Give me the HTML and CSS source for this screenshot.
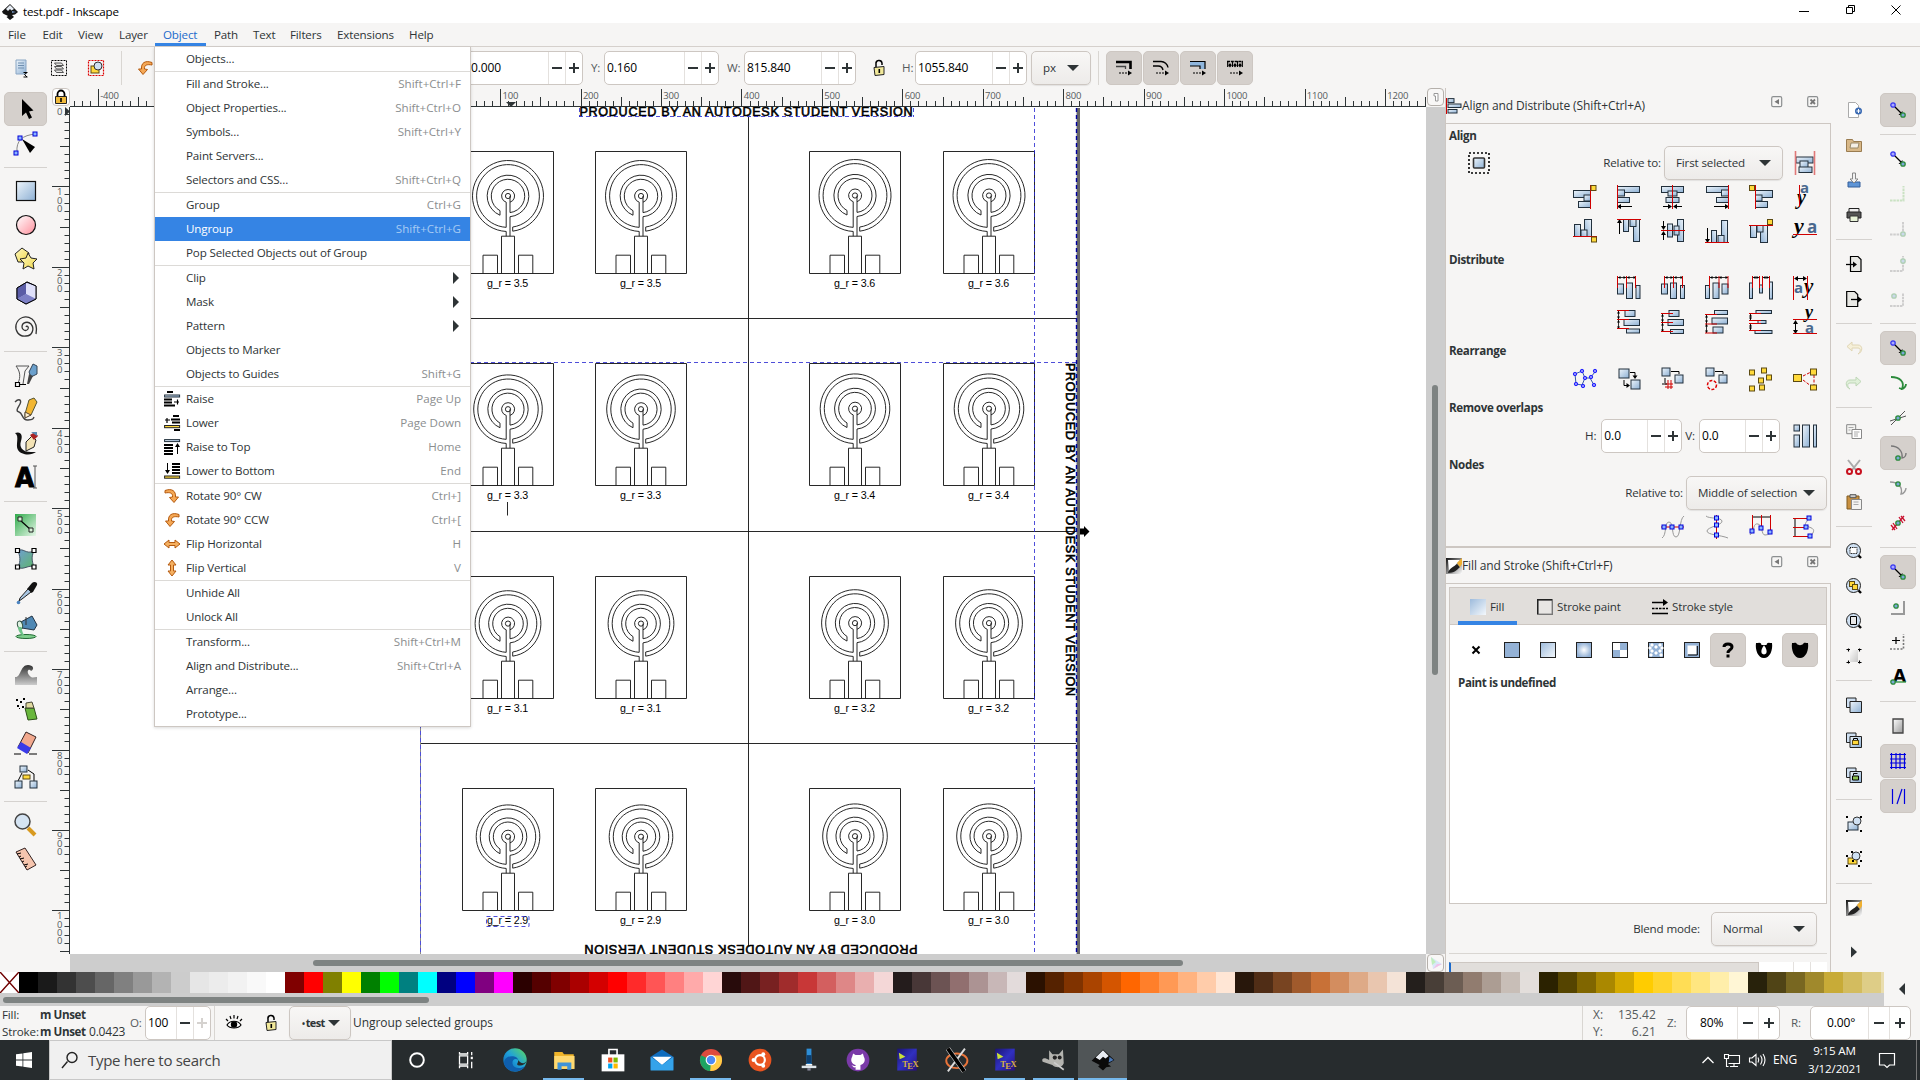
FILE: index.html
```html
<!DOCTYPE html>
<html lang="en">
<head>
<meta charset="utf-8">
<title>test.pdf - Inkscape</title>
<link rel="stylesheet" href="styles.css">
</head>
<body>
<svg class="defs" aria-hidden="true">
  <defs>
    <linearGradient id="gb" x1="0" y1="0" x2="1" y2="1"><stop offset="0" stop-color="#9dbbdc"/><stop offset="1" stop-color="#f4f8fc"/></linearGradient>
    <linearGradient id="gl" x1="0" y1="0" x2="1" y2="1"><stop offset="0" stop-color="#eef5fb"/><stop offset="1" stop-color="#8db0d4"/></linearGradient>
    <linearGradient id="gp" x1="0" y1="0" x2="1" y2="1"><stop offset="0" stop-color="#fff"/><stop offset="1" stop-color="#ff8f9c"/></linearGradient>
    <linearGradient id="gy" x1="0" y1="0" x2="1" y2="1"><stop offset="0" stop-color="#fff9c4"/><stop offset="1" stop-color="#f0d84a"/></linearGradient>
    <linearGradient id="gg" x1="0" y1="0" x2="1" y2="1"><stop offset="0" stop-color="#2faa4a"/><stop offset="1" stop-color="#e8f7ea"/></linearGradient>
    <linearGradient id="gt" x1="0" y1="0" x2="1" y2="1"><stop offset="0" stop-color="#6f9fd0"/><stop offset="1" stop-color="#5fb56a"/></linearGradient>
    <linearGradient id="gk" x1="0" y1="0" x2="0" y2="1"><stop offset="0" stop-color="#333"/><stop offset="1" stop-color="#ccc"/></linearGradient>
    <linearGradient id="gw" x1="0" y1="0" x2="1" y2="1"><stop offset="0" stop-color="#fff"/><stop offset="1" stop-color="#999"/></linearGradient>
    <linearGradient id="gq" x1="0" y1="0" x2="1" y2="1"><stop offset="0" stop-color="#111"/><stop offset="1" stop-color="#fff"/></linearGradient>
    <radialGradient id="gr"><stop offset="0" stop-color="#fff"/><stop offset="1" stop-color="#94b2d6"/></radialGradient>
    <linearGradient id="ge" x1="0" y1="1" x2="1" y2="0"><stop offset="0" stop-color="#0c59a4"/><stop offset=".5" stop-color="#1ea0dc"/><stop offset="1" stop-color="#5fdc5a"/></linearGradient>
    <linearGradient id="gx" x1="0" y1="0" x2="1" y2="1"><stop offset="0" stop-color="#1c1470"/><stop offset=".5" stop-color="#3030c0"/><stop offset="1" stop-color="#28107a"/></linearGradient>
  </defs>
</svg>

<header class="titlebar">
  <i class="ic s16" data-icon="inkscape"></i><span class="title">test.pdf - Inkscape</span>
  <div class="winbtns"><i class="ic s12" data-icon="wmin"></i><i class="ic s12" data-icon="wmax"></i><i class="ic s12" data-icon="wclose"></i></div>
</header>

<nav class="menubar">
  <span class="m1">File</span><span class="m2">Edit</span><span class="m3">View</span><span class="m4">Layer</span><span class="m5 open">Object</span><span class="m6">Path</span><span class="m7">Text</span><span class="m8">Filters</span><span class="m9">Extensions</span><span class="m10">Help</span>
</nav>

<div class="toolbar">
  <i class="ic s24 ti" data-icon="selall"></i><i class="ic s24 ti" data-icon="sellayers"></i><i class="ic s24 ti" data-icon="desel"></i>
  <b class="vsep"></b><i class="ic s24 ti rot" data-icon="rotccw"></i>
  <div class="entry e-x"><span>0.000</span><u class="minus"></u><u class="plus"></u></div>
  <label class="lb-y">Y:</label><div class="entry e-y"><span>0.160</span><u class="minus"></u><u class="plus"></u></div>
  <label class="lb-w">W:</label><div class="entry e-w"><span>815.840</span><u class="minus"></u><u class="plus"></u></div>
  <i class="ic s16 lock" data-icon="lock"></i>
  <label class="lb-h">H:</label><div class="entry e-w"><span>1055.840</span><u class="minus"></u><u class="plus"></u></div>
  <div class="combo unit">px<em></em></div>
  <b class="vsep v2"></b>
  <div class="tog"><i class="ic s16" data-icon="aff1"></i></div><div class="tog"><i class="ic s16" data-icon="aff2"></i></div><div class="tog"><i class="ic s16" data-icon="aff3"></i></div><div class="tog"><i class="ic s16" data-icon="aff4"></i></div>
</div>

<main class="work">
  <aside class="toolbox" id="toolbox"></aside>
  <section class="desk">
    <div class="rulerrow"><div class="rulerlock"><i class="ic s16" data-icon="padlock"></i></div><svg id="hruler" class="hruler" viewBox="70 88 1356 19"></svg><div class="cbtn"><i class="ic s12" data-icon="onetoone"></i></div></div>
    <div class="canvasrow"><svg id="vruler" class="vruler" viewBox="52 107 18 847"></svg><svg id="canvas" class="canvas" viewBox="70 107 1356 847"></svg><div class="vscroll"><div></div></div></div>
    <div class="scrollrow"><div class="hscroll"><div></div></div><div class="cbtn"><i class="ic s16" data-icon="cms"></i></div></div>
  </section>

  <section class="dock">
    <div class="dhead"><i class="ic s16" data-icon="align"></i><span>Align and Distribute (Shift+Ctrl+A)</span><i class="ic s12 dk1" data-icon="iconify"></i><i class="ic s12 dk2" data-icon="closebox"></i></div>
    <div class="panel align">
      <h4 class="first">Align</h4>
      <div class="row"><i class="ic s24 selgrp" data-icon="selgroup"></i><label>Relative to:</label><div class="combo c-first">First selected<em></em></div><span class="cell"><i class="ic s24" data-icon="relobj"></i></span></div>
      <div class="row" data-cells="al1 al2 al3 al4 al5 al6"></div>
      <div class="row" data-cells="bl1 bl2 bl3 bl4 bl5 bl6"></div>
      <h4>Distribute</h4>
      <div class="row" data-cells="d1 d2 d3 d4 d5"></div>
      <div class="row" data-cells="f1 f2 f3 f4 f5"></div>
      <h4>Rearrange</h4>
      <div class="row" data-cells="r1 r2 r3 r4 r5 r6"></div>
      <h4>Remove overlaps</h4>
      <div class="row"><label class="hh">H:</label><div class="entry e-s"><span>0.0</span><u class="minus"></u><u class="plus"></u></div><label class="vv">V:</label><div class="entry e-s"><span>0.0</span><u class="minus"></u><u class="plus"></u></div><span class="cell ov"><i class="ic s24" data-icon="overlap"></i></span></div>
      <h4>Nodes</h4>
      <div class="row"><label>Relative to:</label><div class="combo c-mid">Middle of selection<em></em></div></div>
      <div class="row" data-cells="n1 n2 n3 n4"></div>
    </div>
    <div class="dhead second"><i class="ic s16" data-icon="fillstroke"></i><span>Fill and Stroke (Shift+Ctrl+F)</span><i class="ic s12 dk1" data-icon="iconify"></i><i class="ic s12 dk2" data-icon="closebox"></i></div>
    <div class="panel fill">
      <div class="notebook">
        <div class="tabs"><div class="tab on"><i class="ic s16" data-icon="tfill"></i>Fill</div><div class="tab t2"><i class="ic s16" data-icon="tstroke"></i>Stroke paint</div><div class="tab t3"><i class="ic s16" data-icon="tstyle"></i>Stroke style</div></div>
        <div class="paints" id="paints"></div>
        <p class="undef">Paint is undefined</p>
      </div>
      <div class="blend"><label>Blend mode:</label><div class="combo c-norm">Normal<em></em></div></div>
      <div class="slider"><div class="track"></div><div class="num"></div></div>
    </div>
  </section>
  <aside class="col commands" id="commands"></aside>
  <aside class="col snaps" id="snaps"></aside>
</main>

<div class="palette"><div class="swatches" id="swatches"></div><i class="larrow"></i></div>
<div class="palscroll"><div></div></div>

<footer class="status">
  <div class="style"><div><span class="k">Fill:</span><b>m Unset</b></div><div><span class="k">Stroke:</span><b>m Unset</b><span class="sw">0.0423</span></div></div>
  <label class="lb-o">O:</label><div class="entry e-o"><span>100</span><u class="minus"></u><u class="plus off"></u></div><b class="vsep v3"></b>
  <i class="ic s16 eye" data-icon="eye"></i><i class="ic s16 lk2" data-icon="lock"></i>
  <div class="combo layer"><b><small>•</small>&thinsp;test</b><em></em></div><span class="msg">Ungroup selected groups</span>
  <b class="vsep v4"></b>
  <div class="xy"><div><span>X:</span><span>135.42</span></div><div><span>Y:</span><span>6.21</span></div></div>
  <label class="lb-z">Z:</label><div class="entry e-z"><span>80%</span><u class="minus"></u><u class="plus"></u></div>
  <label class="lb-r">R:</label><div class="entry e-r"><span>0.00°</span><u class="minus"></u><u class="plus"></u></div>
</footer>

<footer class="taskbar">
  <div class="start"><i class="ic s16" data-icon="win"></i></div>
  <div class="search"><i class="ic s18" data-icon="search"></i><span>Type here to search</span></div>
  <div class="apps" id="apps"></div>
  <div class="tray"><i class="ic s14 y1" data-icon="up"></i><i class="ic s18 y2" data-icon="net"></i><i class="ic s18 y3" data-icon="vol"></i><span class="eng">ENG</span><span class="clock">9:15 AM<br>3/12/2021</span><i class="ic s18 y4" data-icon="note"></i><b></b></div>
</footer>

<div class="menu" id="menu"></div>
<script src="app.js"></script>
</body>
</html>
```
FILE: styles.css
```css
* { box-sizing: border-box; }
body { margin: 0; width: 1920px; height: 1080px; overflow: hidden; display: flex; flex-direction: column; font: 11.6px/16px "Open Sans", "Noto Sans", sans-serif; color: #2e3436; background: #f6f5f4; letter-spacing: -.15px; }
.defs { width: 0; height: 0; position: absolute; }
.ic { display: block; flex: none; }
.ic svg { display: block; width: 100%; height: 100%; overflow: visible; }
.s12 { width: 12px; height: 12px; } .s14 { width: 14px; height: 14px; } .s16 { width: 16px; height: 16px; } .s18 { width: 18px; height: 18px; } .s24 { width: 24px; height: 24px; }
i, em, u { font-style: normal; text-decoration: none; }

.titlebar { height: 23px; background: #fff; display: flex; align-items: center; padding: 0 0 0 2px; flex: none; color: #000; }
.title { margin-left: 5px; }
.winbtns { margin-left: auto; display: flex; gap: 34px; padding-right: 18px; margin-bottom: 3px; }

.menubar { height: 24px; flex: none; display: flex; border-bottom: 1px solid #d5d0cc; line-height: 24px; }
.menubar span { padding-left: 8px; white-space: nowrap; }
.m1, .m2 { width: 34.5px; } .m2 { width: 35.5px; } .m3 { width: 41px; } .m4 { width: 44px; } .m5 { width: 51px; } .m6 { width: 39px; } .m7 { width: 37px; } .m8 { width: 47px; } .m9 { width: 72px; }
.menubar .open { color: #1b6acb; box-shadow: inset 0 -3px #3584e4; }

.toolbar { height: 41px; flex: none; display: flex; align-items: center; padding-left: 10px; }
.ti { margin-right: 13px; }
.vsep { width: 1px; height: 34px; background: #d9d6d2; flex: none; }
.rot { margin: 0 -1px 0 11px; }
.entry { height: 34px; border: 1px solid #cdc7c2; border-radius: 5px; background: #fff; display: flex; align-items: center; color: #000; padding-left: 2px; flex: none; font-size: 12px; letter-spacing: -.1px; }
.entry span { flex: 1; white-space: nowrap; }
.entry u { width: 17px; height: 32px; border-left: 1px solid #e4e1de; position: relative; flex: none; }
u::before, u.plus::after { content: ""; position: absolute; background: #2e3436; left: 3px; top: 15px; width: 10px; height: 2px; }
u.plus::after { left: 7px; top: 11px; width: 2px; height: 10px; }
u.off::before, u.off::after { background: #d5d2cf; }
.e-x { width: 130px; margin-left: 297px; } .e-x span { padding-left: 15px; }
.e-y { width: 115px; } .e-w { width: 112px; }
.toolbar label { color: #555b5d; }
.lb-y { width: 21px; padding-left: 8px; } .lb-w { width: 25px; padding-left: 8px; } .lb-h { width: 28px; padding-left: 15px; }
.lock { margin-left: 15px; }
.combo { height: 34px; border: 1px solid #cdc7c2; border-radius: 5px; background: linear-gradient(#f8f7f6, #edebe9); box-shadow: 0 1px 1px rgba(0,0,0,.08); display: flex; align-items: center; justify-content: space-between; flex: none; padding: 0 11px; white-space: nowrap; }
.combo em { border: 6px solid transparent; border-top: 6px solid #2e3436; border-bottom: 0; }
.unit { width: 60px; margin-left: 4px; }
.v2 { margin: 0 7px; }
.tog { width: 36px; height: 34px; border: 1px solid #cdc7c2; border-radius: 5px; background: #d5d0cc; display: flex; align-items: center; justify-content: center; margin-right: 1px; flex: none; }

.work { height: 884px; flex: none; display: flex; overflow: hidden; }
.toolbox { width: 52px; padding: 4px 0 0 4px; flex: none; }
.toolbox .b { width: 43px; height: 34px; display: flex; align-items: center; justify-content: center; border-radius: 5px; }
.toolbox .b.on { background: #d5d0cc; border: 1px solid #cdc7c2; }
.sp { height: 14px; display: flex; align-items: center; width: 43px; }
.sp::before { content: ""; height: 1px; background: #d5d2cf; flex: 1; }
.desk { width: 1393px; flex: none; display: flex; flex-direction: column; }
.rulerrow { height: 19px; display: flex; }
.rulerlock { width: 18px; height: 18px; border: 1px solid #cdc7c2; border-radius: 4px; background: #fff; flex: none; display: flex; justify-content: center; }
.hruler { width: 1356px; height: 19px; flex: none; }
.cbtn { width: 17px; height: 18px; margin-left: 1px; border: 1px solid #b5b0ab; border-radius: 4px; background: #f8f7f6; display: flex; align-items: center; justify-content: center; flex: none; overflow: hidden; }
.canvasrow { height: 847px; display: flex; }
.vruler { width: 18px; height: 847px; flex: none; }
.canvas { width: 1356px; height: 847px; flex: none; background: #fff; }
.vscroll { flex: 1; background: #cdcdcd; padding: 278px 0 0 6px; }
.vscroll div { width: 6px; height: 290px; border-radius: 3px; background: #7e8382; }
.scrollrow { height: 18px; display: flex; }
.hscroll { margin-left: 18px; width: 1356px; background: #cdcdcd; padding: 6px 0 0 243px; flex: none; }
.hscroll div { width: 870px; height: 6px; border-radius: 3px; background: #7e8382; }
.rl { font: 9.5px "Open Sans", sans-serif; fill: #555b5d; letter-spacing: -.2px; }

.dock { width: 386px; flex: none; border-left: 1px solid #cdc7c2; height: 884px; display: flex; flex-direction: column; overflow: hidden; }
.dhead { height: 35px; flex: none; display: flex; align-items: center; font-size: 12px; letter-spacing: -.12px; }
.dhead span { width: 309px; white-space: nowrap; }
.dk2 { margin-left: 24px; }
.dk1, .dk2 { margin-bottom: 8px; }
.panel { border: 1px solid #cdc7c2; border-left: 0; flex: none; }
.align { height: 425px; border-bottom-width: 2px; }
.panel h4 { margin: 0; height: 23px; line-height: 23px; font-size: 11.6px; font-weight: 700; padding-left: 3px; letter-spacing: -.35px; }
.panel h4.first { height: 22px; }
.row { height: 34px; display: flex; justify-content: flex-end; align-items: center; padding-right: 3px; }
.cell { width: 44px; display: flex; justify-content: center; flex: none; }
.row label { padding-right: 3px; }
.selgrp { margin-right: auto; margin-left: 21px; }
.c-first { width: 119px; } .c-mid { width: 141px; }
.e-s { width: 81px; } .row .hh { padding-right: 5px; } .row .vv { padding-left: 3px; padding-right: 4px; } .ov { margin-left: 3px; }
.fill { height: 400px; padding: 3px 3px 0; }
.notebook { height: 317px; border: 1px solid #cdc7c2; background: #fff; }
.tabs { height: 37px; background: #e1dedb; border-bottom: 1px solid #cdc7c2; display: flex; padding-left: 8px; }
.tab { display: flex; align-items: center; gap: 4px; height: 37px; padding: 0 0 0 12px; width: 59px; white-space: nowrap; }
.tab.on { box-shadow: inset 0 -4px #3584e4; }
.t2 { width: 115px; padding-left: 20px; } .t3 { width: 100px; padding-left: 20px; }
.paints { display: flex; padding: 8px 0 0 8px; }
.paints .b { width: 36px; height: 34px; display: flex; align-items: center; justify-content: center; border-radius: 5px; border: 1px solid transparent; }
.paints .on { background: #d5d0cc; border-color: #cdc7c2; }
.undef { margin: 8px 0 0 8px; font-weight: 700; letter-spacing: -.4px; }
.blend { height: 50px; display: flex; align-items: center; justify-content: flex-end; padding-right: 10px; border-bottom: 1px solid #d9d6d2; }
.blend label { margin-right: 11px; }
.c-norm { width: 106px; }
.slider { height: 20px; margin-top: 8px; display: flex; }
.track { width: 310px; background: #e1dedb; border: 1px solid #cdc7c2; border-left: 2px solid #1b6acb; }
.num { flex: 1; background: linear-gradient(90deg, #fff 34px, #e4e1de 34px, #e4e1de 35px, #fff 35px, #fff 51px, #e4e1de 51px, #e4e1de 52px, #fff 52px); }
.col { flex: none; padding-top: 5px; display: flex; flex-direction: column; gap: 1px; align-items: center; }
.commands { width: 45px; } .snaps { width: 44px; padding-right: 1px; }
.col .b { width: 36px; height: 34px; display: flex; align-items: center; justify-content: center; border-radius: 5px; border: 1px solid transparent; flex: none; }
.col .on { background: #d5d0cc; border-color: #cdc7c2; }
.col .sp { height: 13px; width: 36px; flex: none; }
.col .faint { opacity: .35; }
.col .more { height: 52px; }

.palette { height: 21px; flex: none; display: flex; }
.swatches { width: 1884px; display: flex; overflow: hidden; }
.swatches i { width: 19px; flex: none; }
.swatches svg { display: block; width: 19px; height: 21px; background: #fff; flex: none; }
.larrow { border: 6px solid transparent; border-right: 6px solid #2e3436; border-left: 0; height: 0; margin: 11px 0 0 15px; }
.palscroll { height: 13px; flex: none; width: 1884px; background: #cdcdcd; padding: 4px 0 0 3px; }
.palscroll div { width: 426px; height: 6px; border-radius: 3px; background: #7e8382; }

.status { height: 34px; flex: none; display: flex; align-items: center; padding-left: 2px; }
.style { width: 128px; flex: none; line-height: 17px; white-space: nowrap; }
.style div { display: flex; }
.style .k { width: 38px; flex: none; } .style b { width: 49px; flex: none; letter-spacing: -.4px; }
.style .sw { font-size: 12px; letter-spacing: -.2px; }
.status label { color: #555b5d; }
.lb-o { width: 15px; } .e-o { width: 66px; }
.v3 { margin-left: 3px; }
.eye { margin-left: 11px; } .lk2 { margin: 0 10px 0 21px; }
.layer { width: 62px; padding: 0 10px 0 12px; font-size: 11px; } .layer b { letter-spacing: -.6px; } .layer small { font-size: 8px; }
.msg { margin-left: 2px; width: 1229px; font-size: 12px; letter-spacing: -.05px; }
.xy { width: 74px; margin-left: 10px; line-height: 17px; font-size: 12px; letter-spacing: .1px; color: #555b5d; } .xy div { display: flex; } .xy span:first-child { flex: 1; } .xy div { width: 63px; }
.lb-z { width: 19px; } .e-z { width: 94px; padding-left: 13px; } .e-z u, .e-r u { width: 21px; }
.e-z u::before, .e-r u::before { left: 5px; } .e-z u.plus::after, .e-r u.plus::after { left: 9px; }
.lb-r { width: 30px; padding-left: 11px; } .e-r { width: 101px; padding-left: 16px; }

.taskbar { height: 40px; flex: none; background: #272c2e; display: flex; color: #fff; }
.start { width: 49px; display: flex; align-items: center; padding-left: 16px; }
.search { width: 343px; background: #f0f0f0; color: #444; font-size: 15px; letter-spacing: -.3px; display: flex; align-items: center; padding-left: 11px; border: 1px solid #c8c8c8; }
.search span { margin-left: 9px; }
.apps { display: flex; width: 736px; }
.apps div { width: 49px; display: flex; align-items: center; justify-content: center; flex: none; }
.apps .ic { width: 26px; height: 26px; }
.apps .run { background: linear-gradient(90deg, transparent 4px, #76b9ed 4px, #76b9ed 45px, transparent 45px) bottom / 100% 2px no-repeat; }
.apps .act { background: linear-gradient(#76b9ed, #76b9ed) bottom / 100% 2px no-repeat #505557; }
.tray { margin-left: auto; display: flex; align-items: center; }
.y1 { margin-right: 8px; } .y2 { margin-right: 7px; } .y3 { margin-right: 7px; }
.eng { width: 35px; font-size: 12px; } .clock { width: 53px; text-align: center; line-height: 18px; margin-right: 17px; }
.tray b { width: 1px; height: 40px; background: #777; margin: 0 3px 0 20px; }

.menu { position: absolute; left: 154px; top: 47px; width: 317px; height: 680px; background: #fff; border: 1px solid #cdc7c2; border-top: 0; box-shadow: 0 1px 3px rgba(0,0,0,.15); }
.mi { height: 24px; display: flex; align-items: center; padding: 0 9px 0 9px; white-space: nowrap; }
.mi .ic { margin-right: 6px; } .mi .no { width: 22px; margin: 0; }
.mi span { flex: 1; } .mi kbd { font: inherit; color: #8b8e8f; letter-spacing: 0; }
.mi.hot { background: #3584e4; color: #fff; } .mi.hot kbd { color: #a7cbf4; }
.mi em { border: 6px solid transparent; border-left: 6px solid #2e3436; border-right: 0; margin-right: 2px; }
.ms { height: 1px; background: #dcdad7; }
```
FILE: app.js
```js
// Icon helpers: outlined blue / yellow boxes, red rules and plain strokes.
const B = (x, y, w, h) => `<rect x="${x}" y="${y}" width="${w}" height="${h}" fill="url(#gl)" stroke="#22303c" stroke-width="1"/>`;
const Y = (x, y, w = 5, h = 5) => `<rect x="${x}" y="${y}" width="${w}" height="${h}" fill="#ffd93b" stroke="#5c4a12"/>`;
const R = d => `<path d="${d}" stroke="#d00000" fill="none"/>`;
const K = (d, w = 1, f = 'none', s = '#000') => `<path d="${d}" stroke="${s}" stroke-width="${w}" fill="${f}"/>`;
const F = (d, f = '#000') => `<path d="${d}" fill="${f}"/>`;
const T = (t, x, y, s, st) => `<text x="${x}" y="${y}" font-size="${s}" style="${st}">${t}</text>`;
const rot = s => `<g transform="rotate(90 12 12)">${s}</g>`;
const swap = s => `<g transform="matrix(0 1 1 0 0 0)">${s}</g>`;
const N = (x, y) => `<rect x="${x - 2}" y="${y - 2}" width="4" height="4" fill="#8ab4ff" stroke="#0000d8"/>`;
const dot = (x, y, c, f) => `<circle cx="${x}" cy="${y}" r="2.2" fill="${f}" stroke="${c}" stroke-width="1.3"/>`;
const blueDot = (x, y) => dot(x, y, '#3a3af0', '#a9a9ff'), greenDot = (x, y) => dot(x, y, '#2c8a3a', '#7aa8d8');

const al1 = B(.5, 5.5, 17, 7) + B(11, 10, 6.5, 6) + B(5.5, 16.5, 12, 6) + R('M17.5 0V24') + Y(18, .5);
const al5 = B(6.5, 5.5, 17, 7) + B(6.5, 10, 6.5, 6) + B(6.5, 16.5, 12, 6) + R('M6.5 0V24') + Y(.5, .5);
const al2 = B(.5, 1.5, 22, 6) + B(.5, 5, 7, 6) + B(.5, 12.5, 12, 5) + K('M1 21.5H15') + F('M0 21.5l4-2.5v5z') + R('M.5 0V24');
const al3 = B(.5, 1.5, 22, 6) + B(7, 6, 9, 5) + B(5, 12.5, 13, 5) + K('M2 21.5H9M14 21.5H21') + F('M11 21.5l-4-2.5v5zM12 21.5l4-2.5v5z') + R('M11.5 0V24');
const al4 = B(1.5, 1.5, 22, 6) + B(16.5, 5, 7, 6) + B(11.5, 12.5, 12, 5) + K('M9 21.5H23') + F('M24 21.5l-4-2.5v5z') + R('M23.5 0V24');
const arr = K('M1 1.5H19', .8) + F('M1 1.5l2.500-1.500v3zM9 1.5l-2.500-1.500v3zM10 1.5l2.500-1.500v3zM19 1.5l-2.500-1.500v3z');
const bars = B(.5, 8, 6, 10) + B(9.5, 7, 6, 15.5) + B(19, 9.5, 4, 13);
const d1 = bars + arr + R('M.5 0V12M9.5 0V12M18.5 0V12'), d2 = B(.5, 8, 6, 10) + B(9.5, 7, 6, 15.5) + B(19.5, 9.5, 4, 13) + `<g transform="translate(3 0)">${arr}</g>` + R('M3.5 0V12M12.5 0V12M21.5 0V12'), d3 = B(.5, 9.5, 4, 13) + B(8, 7, 6, 15.5) + B(17, 8, 6, 10) + `<g transform="translate(4 0)">${arr}</g>` + R('M4.5 0V12M14 0V12M23 0V12');
const d4 = B(.5, 7, 3, 15.5) + B(10.5, 9, 3, 8) + B(20.5, 6, 3, 17) + K('M4 1.500H10M14 1.500H20', .8) + F('M4 1.5l2.500-1.500v3zM10 1.5l-2.500-1.500v3zM14 1.5l2.500-1.500v3zM20 1.5l-2.500-1.500v3z') + R('M3.5 0V12M10.5 0V12M13.5 0V12M20.5 0V12');
const ya = 'font-family:Liberation Serif;font-style:italic;font-weight:bold', aa = 'font-family:Open Sans;font-weight:bold;fill:#49688e';
const snapPair = blueDot(3, 3) + K('M5 5l6 6', 1.2) + F('M12.500 9v4h-4z') + greenDot(13, 13);
const lens = K('M11 11l4 4', 2.4) + `<circle cx="7.500" cy="7.500" r="7" fill="#cfe0f2" stroke="#222"/>`;
const pages = `<path d="M.5 1h9.500v9.500h-9.500z" fill="#cfe0f2" stroke="#222"/><path d="M4 4.500h11.500v11h-11.500z" fill="url(#gl)" stroke="#222"/>`;
const orangeCurve = `<path d="M1 2.500C8 0 12 3 11.500 9H14.500L10 14.500 5.500 9.500 8.500 9C9 5 6 4 1 5z" fill="#f5a855" stroke="#b45a10"/>`;
const inkscape = `<path d="M8 0L16 8 13 10.500 10 11 12 13 8 16 4.500 13 6 12 1 9.500 0 7.500z" fill="#141414"/><path d="M8 1L12 5 9.500 6.500 8 5 6 7 4 5z" fill="#e8eef6"/><path d="M10 7l4 1-4 1z" fill="#6f8fb8"/>`;
const tex = `<rect x="2" y="1" width="12" height="13.500" fill="url(#gx)"/><path d="M3 3.500l4 2.500-3.500 1.500z" fill="#c8e03a"/>` + T('T<tspan dy="1.500">E</tspan><tspan dy="-1.500">X</tspan>', 5, 12, 5.2, 'font-family:Liberation Serif;font-weight:bold;fill:#d8b040;letter-spacing:-.3px');

// name: [viewBox size, markup]
const ICONS = {
  inkscape: [16, inkscape],
  wmin: [12, K('M1 7.500H11')], wmax: [12, K('M2.500 3.500h6v6h-6zM4.500 3.500v-2h6v6h-2')], wclose: [12, K('M1.500 1.500l9 9M10.500 1.500l-9 9')],
  selall: [24, `<path d="M6 4h10v14h-10z" fill="url(#gl)" stroke="#8aa6c4"/>` + K('M8 7h6M8 9.500h6M8 12h6', 1, 'none', '#6f8fb0') + K('M13.500 16.500h4M17 16.500l-2.500 2 2.500 2.500M13.500 21h4')],
  sellayers: [24, K('M4.500 4.500h15v15h-15z', 1).replace('/>', ' stroke-dasharray="2 1"/>') + K('M7.500 7h7l2 2.500h-7zM7.500 10.500h7l2 2.500h-7zM7.500 14h7l2 2.500h-7z', .9, '#e4e4e2', '#444')],
  desel: [24, `<path d="M4.500 4.500h15v15h-15z" fill="none" stroke="#d00" stroke-width="1.200" stroke-dasharray="2 1"/>` + Y(7, 10, 8, 7) + `<circle cx="14" cy="10" r="4" fill="#cfe0f2" stroke="#333"/>`],
  rotccw: [24, `<g transform="translate(20 4) scale(-1 1)">${orangeCurve}</g>`],
  lock: [16, K('M5 8V4a3 3 0 0 1 6 -1v2', 1.5) + `<path d="M3 7.500l10-1v8l-9 1z" fill="#f2e99a" stroke="#222"/>` + F('M7.500 9h1.600v4h-1.600z')],
  padlock: [16, K('M4.500 8V5a3.500 3.500 0 0 1 7 0v3', 1.8) + `<path d="M2.500 7.500h11v7h-11z" fill="#f0b93a" stroke="#222"/>` + F('M7.200 9h1.600v4h-1.600z')],
  aff1: [16, K('M0 2H14.500V9', 2.6) + K('M0 6.500H9.500V9', 1.3, 'none', '#444') + K('M3 13h10', 1.2).replace('/>', ' stroke-dasharray="2 1"/>') + F('M12 10.500l4 2.500-4 2.500z')],
  aff2: [16, K('M0 1.500H8a7 7 0 0 1 7 6M0 6H5a5 5 0 0 1 5 4', 1.4) + K('M3 13h10', 1.2).replace('/>', ' stroke-dasharray="2 1"/>') + F('M12 10.500l4 2.500-4 2.500z')],
  aff3: [16, `<path d="M0 1h15v8h-5V6H0z" fill="#8fb6dd"/>` + K('M0 1.500H15V9M0 6H10V9', 1.2) + K('M3 13h10', 1.2).replace('/>', ' stroke-dasharray="2 1"/>') + F('M12 10.500l4 2.500-4 2.500z')],
  aff4: [16, K('M0 1.500H16', 1.6).replace('/>', ' stroke-dasharray="3 .8"/>') + K('M.7 1v6M5.500 1v6M10.500 1v6M15.300 1v6', 1.200) + F('M3 3l1.800 2.200L3 7.500 1.200 5.200zM8 3l1.800 2.200L8 7.500 6.200 5.200zM13 3l1.800 2.200L13 7.500 11.200 5.200z') + K('M3 13h10', 1.2).replace('/>', ' stroke-dasharray="2 1"/>') + F('M12 10.500l4 2.500-4 2.500z')],
  onetoone: [12, K('M4 2.500h4v7.500h-2.500v-5h-1.500z', 1, '#fff', '#999')],
  cms: [16, `<path d="M3 2L14 9 5 14z" fill="#d8e8f8"/><path d="M3 2l5 5-4 3z" fill="#bfeebb"/><path d="M5 14l4-5 5 0z" fill="#f2c0e8"/>`],
  align: [16, B(2, .6, 6, 4) + B(2, 6, 13, 3.5) + B(2, 11.500, 9, 3.5) + R('M.5 0V16')],
  fillstroke: [16, `<path d="M0 0h16v16h-16z" fill="url(#gq)"/><path d="M2 2h12L3 14z" fill="#fff"/><path d="M2 15C3 10 8 9 11 6l3 3C11 12 8 15 2 15z" fill="#222"/><path d="M11 5l5-5v6l-2 3z" fill="#f0b030"/>`],
  iconify: [12, `<rect x=".7" y=".7" width="10" height="10" rx="1.500" fill="none" stroke="#8c8f90" stroke-width="1.200"/>` + F('M8 3v5.500L3.500 5.700z', '#777')],
  closebox: [12, `<rect x=".7" y=".7" width="10" height="10" rx="1.500" fill="none" stroke="#8c8f90" stroke-width="1.200"/>` + K('M3.500 3.500l4.500 4.500M8 3.500l-4.500 4.500', 1.8, 'none', '#777')],
  selgroup: [24, K('M2 2h20v20h-20z', 1.6).replace('/>', ' stroke-dasharray="2 2"/>') + `<rect x="6.500" y="7" width="11" height="10" rx="1" fill="url(#gl)" stroke="#333" stroke-width="1.600"/>`],
  relobj: [24, B(3, 6, 17, 6) + B(7, 10, 8, 7) + B(6, 16, 13, 5.5) + K('M2.500 0V24M21.500 0V24', 1.6, 'none', '#e07878')],
  al1: [24, al1], al2: [24, al2], al3: [24, al3], al4: [24, al4], al5: [24, al5],
  al6: [24, T('a', 7, 8, 15, aa) + T('y', 4, 19, 20, ya) + R('M6.500 0V22')],
  bl1: [24, rot(al1)], bl2: [24, rot(al2)], bl3: [24, rot(al3)], bl4: [24, rot(al4)], bl5: [24, rot(al5)],
  bl6: [24, T('y', 1, 14, 22, ya) + T('a', 14, 14, 17, aa) + R('M0 15.500H24')],
  d1: [24, d1], d2: [24, d2], d3: [24, d3], d4: [24, d4],
  d5: [24, K('M2 2.500H13') + F('M1 2.500l4-2.500v5zM14 2.500l-4-2.500v5z') + T('a', 1, 17, 15, aa) + T('y', 11, 17, 21, ya) + R('M.5 0V24M14.500 0V24')],
  f1: [24, swap(d1)], f2: [24, swap(d2)], f3: [24, swap(d3)], f4: [24, swap(d4)],
  f5: [24, K('M2.500 12V23') + F('M2.500 10l-2.500 4h5zM2.500 24l-2.500-4h5z') + T('a', 12, 23, 15, aa) + T('y', 12, 8, 18, ya) + R('M0 9.500H24M0 23.500H24')],
  r1: [24, K('M2 7L9 4 12 11 9 18 3 17 2 7M12 11L17 11 22 5M17 11L21 18', 1, 'none', '#3355aa') + [[2, 7], [9, 4], [12, 11], [10, 19], [3, 17], [18, 10], [22, 4], [21, 18]].map(p => `<circle cx="${p[0]}" cy="${p[1]}" r="1.700" fill="#88f" stroke="#22f"/>`).join('')],
  r2: [24, B(2, 2, 10, 9) + B(14, 13, 9, 9) + K('M13 5.500H18V10M7 13V18.500H11') + F('M18 12l-2.500-3.500h5zM13 18.500l-3.500-2.500v5z')],
  r3: [24, B(1, 1, 8, 8) + B(14, 8, 8, 8) + K('M10 4.500H18V7M4 11v5') + R('M4 17H12M4 20H12M7 13V22M10 13V22') + K('M1 17h5')],
  r4: [24, B(1, 1, 8, 8) + B(14, 8, 8, 8) + K('M10 4.500H18V7') + `<circle cx="7" cy="18" r="4.500" fill="none" stroke="#d00" stroke-width="1.500" stroke-dasharray="3 1.500"/>`],
  r5: [24, Y(.5, 3) + Y(12.500, 1) + Y(17.500, 8) + Y(9.500, 11) + Y(.5, 19) + Y(10.500, 18)],
  r6: [24, R('M10 9L18 5M10 13L18 19M21 8V18').replace('/>', ' stroke-dasharray="3 1.500"/>') + Y(.5, 7.500, 8, 7) + Y(17.500, 2, 6, 6) + Y(17.500, 18, 6, 5)],
  overlap: [24, B(1, 1, 5.5, 6) + B(1, 11, 5.5, 12) + B(9.500, 1, 7, 22) + B(20.500, 1, 3, 22)],
  n1: [24, K('M1 23C6 20 3 7 8 7S10 22 15 22 18 4 23 1', 1, 'none', '#999') + R('M0 12H23') + N(3, 12) + N(11, 12) + N(20, 12)],
  n2: [24, K('M1 1C4 4 16 2 17 6S2 12 2 16 16 20 23 23', 1, 'none', '#999') + R('M11.500 0V24') + N(11.5, 3) + N(11.5, 10) + N(11.5, 20)],
  n3: [24, K('M1 20C6 14 4 8 9 9S12 20 16 20 20 18 23 18', 1, 'none', '#999') + K('M3 2H21') + R('M3.500 0V16M12.500 0V13M21.500 0V17') + N(3, 16) + N(12, 13) + N(21, 17)],
  n4: [24, K('M18 2C12 8 10 10 16 12S22 16 17 22', 1, 'none', '#999') + K('M2 3V21') + R('M0 3.500H16M0 12.500H12M0 21.500H17') + N(16, 3) + N(13, 12) + N(17, 21)],
  tfill: [16, F('M0 0h16v16h-16z', 'url(#gb)')],
  tstroke: [16, `<rect x=".7" y=".7" width="14.600" height="14.600" fill="#e8e6e4" stroke="#777" stroke-width="1.400"/>` + K('M.7 15V.7H15', 1.4, 'none', '#222')],
  tstyle: [16, K('M0 3.500h14M0 14.500h16', 1.4) + K('M0 9.500h16', 1.4).replace('/>', ' stroke-dasharray="2.500 1"/>') + F('M11 0l5 3.500-5 3.500z')],
  p0: [16, K('M4.500 4.500l7 7M11.500 4.500l-7 7', 2)],
  p1: [16, `<rect x=".5" y=".5" width="15" height="15" fill="#94b2d6" stroke="#222"/>`],
  p2: [16, `<rect x=".5" y=".5" width="15" height="15" fill="url(#gb)" stroke="#222"/>`],
  p3: [16, `<rect x=".5" y=".5" width="15" height="15" fill="url(#gr)" stroke="#222"/>`],
  p4: [16, `<rect x=".5" y=".5" width="15" height="15" fill="#fff" stroke="#222"/>` + F('M8 1h7v7h-7zM1 8h7v7h-7z', '#94b2d6')],
  p5: [16, `<rect x=".5" y=".5" width="15" height="15" fill="#94b2d6" stroke="#222"/>` + [[4, 3], [12, 3], [8, 5], [2, 6], [14, 6], [4, 9], [12, 9], [8, 11], [3, 13], [13, 13]].map(p => `<path d="M${p[0]} ${p[1] - 2}l2 2-2 2-2-2z" fill="#fff"/>`).join('')],
  p6: [16, `<rect x="2" y="2" width="12" height="12" fill="#fff" stroke="#94b2d6" stroke-width="3"/><rect x=".5" y=".5" width="15" height="15" fill="none" stroke="#222"/>` + K('M4 13H13.300V4', 1)],
  p7: [16, K('M4 5C4 1 12 1 12 5 12 8 8 7.500 8 11', 3) + F('M6.500 12.500h3v3h-3z')],
  p8: [16, F('M0 1C2 1 4 0 5 1.500L5.500 3H10.500L11 1.500C12 0 14 1 16 1 17 8 14 16 8 16S-1 8 0 1z') + F('M8 3.500C11 7 12 12 8 12.500 4 12 5 7 8 3.500z', '#fff') + F('M5.500 0h5L8 3.500z', '#fff')],
  p9: [16, F('M0 1C2 1 4 0 5 2C6 3.500 10 3.500 11 2 12 0 14 1 16 1 17 8 14 16 8 16S-1 8 0 1z')],
  // toolbox
  t1: [24, F('M8 2L8 19 12 15.500 15 22 18 20.500 15 14.500 19.500 13.500z')],
  t2: [24, K('M3 21C2 10 8 4 22 3', 1, 'none', '#888') + F('M8 8L21 16 16 22z') + N(6, 7) + N(21, 3) + N(2, 22)],
  t3: [24, `<rect x="2.500" y="2.500" width="19" height="19" fill="url(#gl)" stroke="#111" stroke-width="1.200"/>`],
  t4: [24, `<circle cx="12" cy="12" r="9.500" fill="url(#gp)" stroke="#111" stroke-width="1.200"/>`],
  t5: [24, `<path d="M8 1L15 6 13 15 4 15 1 7z" fill="url(#gy)" stroke="#222"/><path d="M14 6L17 11 23 12 19 16 20 22 14 19 9 22 10 16 6 12 12 11z" fill="url(#gy)" stroke="#222"/>`],
  t6: [24, `<path d="M3 7L13 1 22 5V18L12 23 3 18z" fill="#a9abdf" stroke="#223"/><path d="M3 7L12 2V13L3 18z" fill="#5a5ca6"/><path d="M12 2L22 5V18L12 13z" fill="#dfe0fa"/><path d="M3 18L12 13 22 18 12 23z" fill="#7d80c6"/>` + K('M3 7L13 1 22 5V18L12 23 3 18z')],
  t7: [24, K('M12 12c1-2 3 0 2 2-2 3-6 1-6-2 0-5 6-6 9-3 4 5 1 12-5 12C4 22 1 15 2 10 4 2 12 0 18 4c5 4 5 10 4 15', 1.3, 'none', '#333')],
  t8: [24, `<path d="M2 3H15L11 8 9 21" fill="none" stroke="#555"/><path d="M2 3C6 8 7 14 4 20" fill="none" stroke="#555"/><path d="M15 9L19 1 23 3V11L17 14z" fill="#6ba0cc" stroke="#345"/><path d="M15 11l4 2-4 8-2 0z" fill="#444"/>` + K('M1.500 19.500h4v4h-4zM6 21.500h6', 1.2)],
  t9: [24, K('M1 5C5 1 8 3 6 7S1 14 5 15 8 24 14 23 19 22 20 20', 1.4, 'none', '#444') + `<path d="M11 17L15 3 20 1 23 5 17 18 11 20z" fill="#f2b632" stroke="#553"/><path d="M11 15l6 3-6 3z" fill="#fff0cf" stroke="#543"/>`],
  t10: [24, F('M1 2C7 0 9 4 7 10S8 21 17 21l5 0c-5 4-15 3-18-2S6 5 1 2z', '#111') + `<path d="M12 11L18 5 22 9 20 16 12 20z" fill="#f3e3b5" stroke="#222"/><path d="M16 4l5-3 3 4-4 4z" fill="#a22"/><path d="M17 1h6v4z" fill="#5a8ab0"/>`],
  t11: [24, `<text x="1" y="22" font-size="26" textLength="19" lengthAdjust="spacingAndGlyphs" stroke="#000" style="font-family:DejaVu Sans;font-weight:bold">A</text>` + K('M21 1v22M19 1h4M19 23h4', 1, 'none', '#555')],
  t12: [24, F('M1 1h21v22h-21z', 'url(#gg)') + K('M6 7L17 17', 1.2) + `<path d="M4 4h4v4h-4zM15 15h4v4h-4z" fill="#d8f0d8" stroke="#222"/>`],
  t13: [24, `<path d="M4 4C9 0 12 8 20 4 17 10 18 14 20 20 15 17 9 24 4 20 7 14 6 9 4 4z" fill="url(#gt)" stroke="#456"/>` + K('M1.500 1.500h4v4h-4zM18 1.500h4v4h-4zM1.500 18h4v4h-4zM18 18h4v4h-4z', 1.2, '#fff')],
  t14: [24, F('M13 8L18 2C20 0 24 1 23 4L19 11 17 12z', '#111') + `<path d="M14 8L6 17 5 20 8 18 17 11z" fill="#a9c6e2" stroke="#222"/><circle cx="4.500" cy="21.500" r="1.800" fill="#4b83c0"/>`],
  t15: [24, `<ellipse cx="12" cy="21.500" rx="10" ry="2" fill="#7fcf8d" stroke="#263"/><path d="M5 8L18 1 23 10 20 15 8 13z" fill="#4f88b4" stroke="#234"/><ellipse cx="6" cy="10" rx="2.500" ry="4" fill="#dff2e2" stroke="#354" transform="rotate(-15 6 10)"/><path d="M4 12C4 16 6 18 8 20h2C8 17 8 14 7.500 12z" fill="#6fc489"/>` + K('M12 10V2', 1, 'none', '#333')],
  t16: [24, `<path d="M1 14C7 15 6 2 14 2 19 2 21 6 17 8 15 5 12 8 15 12S20 14 23 14V22H1z" fill="url(#gk)"/>`],
  t17: [24, `<path d="M11 11h9l3 11-9 1z" fill="#69b73c" stroke="#2c5018"/><path d="M12 6l6-1 2 6h-8z" fill="#e0d9a0" stroke="#443"/>` + F('M2 2h2v2H2zM6 4h2v2H6zM3 8h2v2H3zM8 9h2v2H8zM9 1h2v2H9zM5 11h1v1H5z')],
  t18: [24, `<path d="M12 1L22 6 14 22 4 16z" fill="#f2a98e" stroke="#322"/><path d="M7 11l10 6-4 6-10-6z" fill="#3a3ae8"/>` + K('M0 23h7M15 23h8', 1)],
  t19: [24, K('M8 8L4 16M14 5L20 9V16', 1) + B(6, 1, 7, 6) + B(1, 16, 7, 7) + B(16, 16, 7, 7) + Y(9, 10, 7, 4)],
  t20: [24, K('M14 15l7 7', 4, 'none', '#d89a20') + `<circle cx="8.500" cy="8.500" r="7.500" fill="#d5e4f3" stroke="#444" stroke-width="1.500"/>`],
  t21: [24, `<path d="M2 5L11 1 22 18 13 23z" fill="#f6c5ae" stroke="#322"/>` + K('M3 7l4-1M5 10l2-1M6 12l4-1M8 15l2-1M10 18l4-1M11 20l2-1')],
  // commands
  c1: [16, K('M2.500.5h7l3 3v12h-10z', 1, '#fff', '#aaa') + `<circle cx="12.500" cy="9" r="3.500" fill="#3b6bb3"/>` + K('M10.500 9h4M12.500 7v4', 1, 'none', '#fff')],
  c2: [16, K('M.5 2.500h6l1 2h8v10h-15z', 1, '#d8b888', '#9a7c50') + K('M5 6h8l-1 5h-8z', 1, '#f4efe6', '#9a8a6a')],
  c3: [16, K('M2 10h12v5h-12z', 1, '#5f95d6', '#345f9a') + K('M6.500 1h3v6h2.500L8 11 4 7h2.500z', 1, '#f2f2f2', '#888')],
  c4: [16, K('M3 1.500h10v4h-10z', 1, '#eee', '#222') + K('M1 5h14v6h-14z', 1, '#555', '#222') + K('M4 9h8v5.500h-8z', 1, '#e8f3d8', '#333')],
  c5: [16, K('M4.500.5h7.500l3 3v12h-10.500z', 1.2, '#e8e8e4') + K('M0 8.500h8', 1.3) + F('M7 5.500l4 3-4 3z')],
  c6: [16, K('M.7.5h8l3 3v12h-11z', 1.2, '#e8e8e4') + K('M5 8.500h8', 1.3) + F('M12 5.500l4 3-4 3z')],
  c7: [16, K('M6 2L1 6.500 6 11V8h6c3 0 3 4 0 6 5-2 5-9 0-9H6z', 1, '#f7e9a8', '#b89c40')],
  c8: [16, K('M10 2l5 4.500L10 11V8H4c-3 0-3 4 0 6-5-2-5-9 0-9h6z', 1, '#b8e8a8', '#5aa048')],
  c9: [16, K('M.7.7h9v9h-9z', 1, '#f4f4f2', '#888') + K('M6 5.500h9.500v9h-9.500z', 1, '#fff', '#888') + K('M2.500 3.500h5M2.500 6h2M8 8h5.500M8 10h4M8 12h4', 1, 'none', '#aaa')],
  c10: [16, K('M2 1l8 10M14 1L6 11', 2, 'none', '#aaa') + `<circle cx="3.500" cy="12.500" r="2.500" fill="none" stroke="#c8101e" stroke-width="2"/><circle cx="12.500" cy="12.500" r="2.500" fill="none" stroke="#c8101e" stroke-width="2"/>`],
  c11: [16, K('M1 2h12v13h-12z', 1, '#c89040', '#805a20') + K('M4 .7h6v3h-6z', 1, '#ccc', '#555') + K('M5.500 5.500h10v10h-10z', 1, '#f4f4f2', '#888') + K('M7.500 8h5M7.500 10.500h5', 1, 'none', '#aaa')],
  c12: [16, lens + K('M4 4.500h7v6h-7z', 1, '#fff').replace('/>', ' stroke-dasharray="1.200 1"/>')],
  c13: [16, lens + Y(3.500, 3.500, 5, 5) + Y(6.500, 6.500, 5, 5)],
  c14: [16, lens + K('M4.500 3.500h6v8h-6z', 1, '#e8e8e8')],
  c15: [16, `<path d="M4 2h8v12h-8z" fill="url(#gw)" opacity=".5"/>` + K('M2.500 3.500V.5M13.500 3.500V.5M2.500 12.500v3M13.500 12.500v3M.5 1.500H4M12 1.500h3.500M.5 14.500H4M12 14.500h3.500', 1.1)],
  c16: [16, pages],
  c17: [16, pages + Y(6.500, 8.500, 6, 4) + K('M7.500 8V6.500h4V8')],
  c18: [16, pages + K('M6.500 9h6v4h-6z', 1, '#8cc152') + K('M7.500 8.500V6.500h4')],
  c19: [16, B(2, 6, 10, 8) + `<circle cx="11" cy="5" r="4" fill="#cfe0f2" stroke="#333"/>` + F('M0 0h2v2H0zM14 0h2v2h-2zM0 14h2v2H0zM14 14h2v2h-2z')],
  c20: [16, Y(2, 7, 9, 6) + `<circle cx="10" cy="5" r="4" fill="#cfe0f2" stroke="#333"/>` + F('M0 4h2v2H0zM0 14h2v2H0zM12 14h2v2h-2zM14 0h2v2h-2zM14 9h2v2h-2zM5 0h2v2H5zM6 9h2v2h-2z')],
  c22: [16, F('M5 2.500L11 8 5 13.500z', '#2e3436')],
  // snapping
  s1: [16, snapPair],
  s3: [16, K('M0 14.500h13.500V0', 2, 'none', '#7abf6a').replace('/>', ' stroke-dasharray="2.500 .8"/>')],
  s4: [16, K('M0 13.500h13V0', 2, 'none', '#888').replace('/>', ' stroke-dasharray="2.500 .8"/>') + greenDot(13, 13)],
  s5: [16, K('M0 15h13V0', 2, 'none', '#888').replace('/>', ' stroke-dasharray="2.500 .8"/>') + greenDot(13, 5)],
  s6: [16, K('M0 15h13V2', 2, 'none', '#888').replace('/>', ' stroke-dasharray="2.500 .8"/>') + greenDot(4, 5)],
  s8: [16, K('M1 2C10 2 15 7 12 14 14 14 16 11 16 9', 1.8, 'none', '#2a8a3a') + K('M12 14l-3-1', 1.4, 'none', '#2a8a3a')],
  s9: [16, K('M0 11L16 6M1 15L15 1', 1, 'none', '#555') + greenDot(8, 8)],
  s10: [16, K('M1 1C8 1 13 6 12 13 15 13 16 10 16 8', 1.4, 'none', '#777') + greenDot(8, 13)],
  s11: [16, K('M0 2C9 2 13 8 11 14 14 14 16 10 16 8', 1.4, 'none', '#999') + greenDot(8, 4)],
  s12: [16, K('M2 15L14 1M1 10l4 5M3 8l4 6M9 2l4 6M11 1l4 5', 1.3, 'none', '#c8102e') + greenDot(8, 8)],
  s14: [16, K('M1 15h13V2', 2, 'none', '#999') + greenDot(6, 7)],
  s15: [16, K('M6 3v7M2 6.500h8', 1.2) + K('M0 15h13.500V0', 1.6, 'none', '#777').replace('/>', ' stroke-dasharray="2 1.500"/>')],
  s16: [16, T('A', 3, 13, 17, 'font-family:DejaVu Sans;font-weight:bold') + K('M3 13h13', 1.4, 'none', '#3a9a4a') + greenDot(3, 13)],
  s17: [16, K('M3 1h10v14h-10z', 1.3, 'url(#gw)', '#444')],
  s18: [16, K('M1.500 0v16M6 0v16M10 0v16M14.500 0v16M0 1.500h16M0 6h16M0 10h16M0 14.500h16', 1.2, 'none', '#0000e0')],
  s19: [16, K('M2.500 1v15M14.500 1v15M12 1L7 16', 1.2, 'none', '#0000e0')],
  // menu
  m1: [16, F('M3 0h6v2H3zM0 7.500h8v2H0zM0 10.500h8v2H0zM0 13.500h11v2H0z') + B(.6, 4, 15, 2) + K('M10 11h5M13.500 8.500v5', 1.2)],
  m2: [16, F('M9 0h6v2H9zM7 3.500h9v2H7zM8 6.500h8v2H8zM10 14h6v2h-6z') + `<rect x=".6" y="10.500" width="15" height="2.200" fill="#ffd93b" stroke="#222"/>` + K('M1 5h5M3 3v5', 1.2)],
  m3: [16, B(.6, .6, 15, 2) + F('M0 5h9v2H0zM0 8h9v2H0zM0 11h9v2H0zM0 14h9v2H0z') + K('M13.500 6v9') + F('M13.500 4l-2.500 4h5z')],
  m4: [16, F('M8 0h8v2H8zM8 3h8v2H8zM8 6h8v2H8zM8 9h8v2H8z') + `<rect x=".6" y="13" width="15" height="2.200" fill="#ffd93b" stroke="#222"/>` + K('M3.500 0v8') + F('M3.500 11l-2.500-4h5z')],
  m5: [16, orangeCurve], m6: [16, `<g transform="translate(16 0) scale(-1 1)">${orangeCurve}</g>`],
  m7: [16, `<path d="M0 8L5 4V6.500H11V4L16 8 11 12V9.500H5V12z" fill="#f5b060" stroke="#b45a10"/>`],
  m8: [16, `<path d="M8 0L12 5H9.500V11H12L8 16 4 11H6.500V5H4z" fill="#f5b060" stroke="#b45a10"/>`],
  eye: [16, K('M1 10C4 5 12 5 15 10 12 14 4 14 1 10z', 1.2, '#fff') + `<circle cx="8" cy="9.500" r="3.200"/>` + K('M2 6l-2-2M5 4L4 1M8 3.500V0M11 4l1-3M14 6l2-2', 1.2)],
  // taskbar
  win: [16, F('M0 2.300L6.500 1.400V7.600H0zM7.300 1.300L16 0V7.600H7.300zM0 8.400H6.500V14.600L0 13.700zM7.300 8.400H16V16L7.300 14.700z', '#fff')],
  search: [18, K('M1 17L6.500 10.500', 1.4, 'none', '#222') + `<circle cx="11" cy="6.500" r="5" fill="none" stroke="#222" stroke-width="1.400"/>`],
  a1: [16, `<circle cx="8" cy="8" r="4.200" fill="none" stroke="#fff" stroke-width="1.200"/>`],
  a2: [16, K('M4 5.500h5v5h-5zM4 3v1.300h5V3M4 13v-1.300h5V13M11.500 3v2M11.500 9v4', .8, 'none', '#fff') + F('M10.900 6h1.300v1.500h-1.300z', '#fff')],
  a3: [16, `<circle cx="8" cy="8" r="7.200" fill="url(#ge)"/><path d="M1.500 8.500C3 4.500 9.500 5 10 8 8 6.500 6 8 6.500 10.500 7 13 11 14 14.500 11.500 12 15.500 6 16 3 13 1.500 11.500 1 10 1.500 8.500z" fill="#0f5fae"/><path d="M10 8C10 10 9 10 9.500 11 11.500 12 14.500 11 15.200 8.500 14 11 11 10 10 8z" fill="#272c2e"/>`],
  a4: [16, F('M2 3h5l1 1.500h6v9H2z', '#f0b429') + F('M2 5.500h12.500v8H2z', '#ffd970') + F('M4 9.500h8.500v4.500h-2.500v-2.200h-3.500V14H4z', '#3f93d8')],
  a5: [16, K('M5.500 5V1.500h5V5', 1, 'none', '#fff') + F('M1 4.500h14V15H1z', '#fff') + F('M5 6.500h2.600v3H5z', '#f25022') + F('M8.300 6.500h2.600v3H8.300z', '#7fba00') + F('M5 10.200h2.600v3H5z', '#00a4ef') + F('M8.300 10.200h2.600v3H8.300z', '#ffb900')],
  a6: [16, F('M1 6L8 1.500 15 6V14H1z', '#0f6cbd') + F('M2 6h12L8 11z', '#fff') + F('M1 6l7 5 7-5v8.500H1z', '#35a3ea')],
  a7: [16, `<circle cx="8" cy="8" r="6.800" fill="#dd4b3e"/><path d="M8 8L1.900 5A6.800 6.800 0 0 0 7.500 14.800L11 9.500z" fill="#1da462"/><path d="M8 8L7.500 14.800A6.800 6.800 0 0 0 14.200 5.200H8z" fill="#ffcd46"/><circle cx="8" cy="8" r="3.300" fill="#fff"/><circle cx="8" cy="8" r="2.600" fill="#4c8bf5"/>`],
  a8: [16, `<circle cx="8" cy="8" r="7" fill="#e95420"/><circle cx="8" cy="8" r="3" fill="none" stroke="#fff" stroke-width="1.300"/><circle cx="4" cy="8" r="1.200" fill="#fff"/><circle cx="10" cy="4.500" r="1.200" fill="#fff"/><circle cx="10" cy="11.500" r="1.200" fill="#fff"/>`],
  a9: [16, F('M6.500 1h3v10h-3z', '#2d8fd8') + F('M6.500 5h3v5h-3z', '#0d3f70') + F('M3.500 11.500h9v1.500h-9z', '#dfe6ea') + F('M6 10.500h4v1h-4z', '#fff') + F('M7 13h2v1.500H7z', '#889')],
  a10: [16, `<circle cx="8" cy="8" r="7" fill="#7a3aa8"/><path d="M5 4l1.500.9h3L11 4l.6 2c1.200 2 .4 4.500-2.100 5V14h-3v-1.500C5 13 4.800 11.500 4 11.200 5 11 5.500 12 6.500 11.700V11C4 10.500 3.200 8 4.400 6z" fill="#fff"/>`],
  a11: [16, tex],
  a12: [16, `<ellipse cx="8.500" cy="8.500" rx="6.500" ry="4.500" fill="none" stroke="#e8743a" stroke-width="1.200"/>` + K('M13.500 1L3 15', 1.2, 'none', '#ddd') + K('M3 1L13 15', 3, 'none', '#ddd') + K('M3 1L13 15', 2.3, 'none', '#000')],
  a14: [16, F('M5 2l2 2.500h4L13.500 1.500 14 10C13 13 9 13 7 11L1 9C0 7 2 6 5 8z', '#b4b4b0') + `<circle cx="8.500" cy="6.500" r="1.300" fill="#222"/><circle cx="11.500" cy="6.500" r="1.200" fill="#222"/>` + K('M8 9.500L14 14', 1, 'none', '#ccc')],
  a15: [16, `<path d="M8 1.500L15 8 11 10.500 13 12 10 12.500 8 14.500 5 12 6 11 1 8.500z" fill="#0a0a0a"/><path d="M8 2L11.500 5.500 9.500 7 8 6 6 8 3.500 6.500z" fill="#e8ecf2"/><path d="M12 6l2.500 2-3 1.500z" fill="#4a78b8"/>`],
  up: [14, K('M1.500 10L7 4.500 12.500 10', 1.3, 'none', '#fff')],
  net: [18, K('M5.500 4.500h11v8h-11M11 12.500v3M7 15.500h8M1.500 3.500h4v4h-4zM3.500 7.500v8h2', 1.1, 'none', '#fff')],
  vol: [18, K('M1.500 7h2.500l4-3.500v11l-4-3.500H1.500z', 1.1, 'none', '#fff') + K('M10 6.500q1.500 2.500 0 5M12.500 4.500q3 4.500 0 9M15 3q4 6 0 12', 1.1, 'none', '#fff')],
  note: [18, K('M1.500 2.500h15v11.500h-5l-2.500 2.500-2.500-2.500h-5z', 1.2, 'none', '#fff')]
};
const $ = id => document.getElementById(id);
const icon = (n, c) => `<i class="ic ${c}" data-icon="${n}"></i>`;

// Columns of tool buttons: '|' is a separator, '*' a pressed button, '~' a dimmed one.
const buttons = (list, cls) => list.split(' ').map(n => n === '|' ? '<div class="sp"></div>'
  : `<div class="b ${n[0] === '*' ? 'on' : n[0] === '~' ? 'faint' : ''} ${n === 'c22' ? 'more' : ''}">${icon(n.replace(/[*~]/, ''), cls)}</div>`).join('');
$('toolbox').innerHTML = buttons('*t1 t2 | t3 t4 t5 t6 t7 | t8 t9 t10 t11 | t12 t13 t14 t15 | t16 t17 t18 t19 | t20 t21', 's24');
$('commands').innerHTML = buttons('c1 c2 c3 c4 | c5 c6 | ~c7 ~c8 | c9 c10 c11 | c12 c13 c14 c15 | c16 c17 c18 | c19 c20 | fillstroke c22', 's16');
$('snaps').innerHTML = buttons('*s1 | s1 ~s3 ~s4 ~s5 ~s6 | *s1 s8 s9 *s10 s11 s12 | *s1 s14 s15 s16 | s17 *s18 *s19', 's16');
$('paints').innerHTML = buttons('p0 p1 p2 p3 p4 p5 p6 *p7 p8 *p9', 's16');
document.querySelectorAll('[data-cells]').forEach(r => r.innerHTML = r.dataset.cells.split(' ').map(n => `<span class="cell">${icon(n, 's24')}</span>`).join(''));
$('apps').innerHTML = ['a1', 'a2', 'a3', 'a4+', 'a5', 'a6', 'a7+', 'a8', 'a9', 'a10', 'a11', 'a12', 'a11+', 'a14+', 'a15!'].map(n => `<div class="${n.endsWith('+') ? 'run' : n.endsWith('!') ? 'act' : ''}">${icon(n.replace(/[+!]/, ''), '')}</div>`).join('');

// Object menu
$('menu').innerHTML = `Objects...
-
Fill and Stroke...;Shift+Ctrl+F
Object Properties...;Shift+Ctrl+O
Symbols...;Shift+Ctrl+Y
Paint Servers...
Selectors and CSS...;Shift+Ctrl+Q
-
Group;Ctrl+G
Ungroup;Shift+Ctrl+G
Pop Selected Objects out of Group
-
Clip;>
Mask;>
Pattern;>
Objects to Marker
Objects to Guides;Shift+G
-
Raise;Page Up;m1
Lower;Page Down;m2
Raise to Top;Home;m3
Lower to Bottom;End;m4
-
Rotate 90° CW;Ctrl+];m5
Rotate 90° CCW;Ctrl+[;m6
Flip Horizontal;H;m7
Flip Vertical;V;m8
-
Unhide All
Unlock All
-
Transform...;Shift+Ctrl+M
Align and Distribute...;Shift+Ctrl+A
Arrange...
Prototype...`.split('\n').map(l => {
  if (l === '-') return '<div class="ms"></div>';
  const [t, k, ic] = l.split(';');
  return `<div class="mi ${t === 'Ungroup' ? 'hot' : ''}">${ic ? icon(ic, 's16') : '<i class="no"></i>'}<span>${t}</span>${k === '>' ? '<em></em>' : k ? `<kbd>${k}</kbd>` : ''}</div>`;
}).join('');

document.querySelectorAll('[data-icon]').forEach(e => {
  const [s, m] = ICONS[e.dataset.icon];
  e.innerHTML = `<svg viewBox="0 0 ${s} ${s}">${m}</svg>`;
});

// Rulers
let h = '', v = '';
for (let u = -430; u <= 1250; u += 10) {
  const x = Math.round(419.7 + .8044 * u) + .5, big = u % 100 === 0, mid = u % 50 === 0;
  h += `M${x} ${big ? 89 : mid ? 97 : 101}V106`;
}
for (let u = 0; u <= 1050; u += 10) {
  const y = Math.round(106 + .8044 * u) + .5, big = u % 100 === 0, mid = u % 50 === 0;
  if (u) v += `M${big ? 52 : mid ? 60 : 64.5} ${y}H70`;
}
let ht = '', vt = '';
for (let u = -400; u <= 1200; u += 100) ht += `<text class="rl" x="${422 + .8044 * u}" y="98.500">${u}</text>`;
for (let u = 0; u <= 1000; u += 100) [...String(u)].forEach((c, i) => vt += `<text class="rl" x="57" y="${115 + .8044 * u + i * 8.200}">${c}</text>`);
$('hruler').innerHTML = `<path d="${h}M70 106.500H1426" stroke="#2e3436" fill="none"/>${ht}<path d="M506 102h10l-5 5z" fill="#2e3436"/>`;
$('vruler').innerHTML = `<path d="${v}M69.500 107V954" stroke="#2e3436" fill="none"/>${vt}<path d="M65 107v9l5-4.500z" fill="#2e3436"/>`;

// Drawing: 4 x 4 ring antennas, each in its frame with a feed and two ground pads.
const s = (r, x) => Math.sqrt(r * r - x * x);
function antenna(cx, bottom, R1) {
  const cy = bottom - 42 - R1, f = bottom - 37.3 - cy, r1 = R1 - 4.1, a = .55 * R1 + 1.3, b = a - 4.1;
  const arc = (r, x0, x1) => `M${x0} ${s(r, x0)}A${r} ${r} 0 1 0 ${x1} ${s(r, x1)}`;
  return `<g transform="translate(${cx} ${cy})"><path d="${arc(R1, 4.7, -1.8)}V${f}M4.700 ${s(R1, 4.7)}V${s(r1, 4.7)}${arc(r1, 4.7, -1.8)}V6.200
    M-1.800 6.200A6.500 6.500 0 1 1 2 6.200M2 0V${s(b, 2)}${arc(b, 2, -8)}V${s(a, 8)}${arc(a, 2, -8)}M2 ${s(a, 2)}V${f}"/><circle r="2.600"/></g>
    <path d="M${cx - 6.5} ${bottom}v-37.300h13v37.300M${cx - 25} ${bottom}v-18.300h14.500v18.300M${cx + 10.5} ${bottom}v-18.300h14.300v18.300"/>
    <path d="M${cx - 45.5} ${bottom}v-122h91v122z"/>`;
}
const cols = [508, 641, 855, 989], rows = [273.5, 485.5, 698.5, 910.5], rad = [35.5, 34.3, 32.9, 31.8];
let g = '', t = '';
rows.forEach((y, i) => cols.forEach((x, j) => {
  g += antenna(x, y, rad[i] + (j > 1 ? .5 : 0));
  t += `<text x="${x - .5}" y="${y + 13.5}" text-anchor="middle">g_r = ${(3.5 - .2 * i + (j > 1 ? .1 : 0)).toFixed(1)}</text>`;
}));
const stamp = tr => `<text transform="${tr}" textLength="333" lengthAdjust="spacing" font-size="12.600" stroke="#000" stroke-width=".6">PRODUCED BY AN AUTODESK STUDENT VERSION</text>`;
$('canvas').innerHTML = `<path d="M1078.500 108V954" stroke="#666" stroke-width="3"/>
  <g fill="none" stroke="#1c1c1c" stroke-width=".95">${g}<path d="M421 318.500H1076M421 531.500H1076M421 743.500H1076M748.500 117V946M507.500 502V515.500"/></g>
  <g font-family="Liberation Sans, sans-serif" font-size="10.700">${t}${stamp('translate(579.500 116)')}${stamp('translate(917.500 945) rotate(180)')}${stamp('translate(1066 363) rotate(90)')}</g>
  <g fill="none" stroke="#2222d0" stroke-dasharray="4 3" opacity=".8"><path d="M420.500 108V954M1034.500 108V954M470 362.500H1076M579 116.500H914M579.500 108v9M913.500 108v9M486.500 916.500H529V926.500H486.500z"/></g>
  <path d="M1076.500 108V954" stroke="#b8b8c8"/><path d="M1076.500 108V954" stroke="#0000a0" stroke-width="1.400" stroke-dasharray="4 3"/>
  <path d="M420.500 108V954" stroke="#111" stroke-dasharray="3 4" stroke-dashoffset="3" opacity=".5"/>
  <path d="M1080 528.500h4v-2.500l5.500 5.500-5.500 5.500v-2.500h-4z"/>`;

// Palette
const pal = '000000 1a1a1a 333333 4d4d4d 666666 808080 999999 b3b3b3 cccccc e6e6e6 ececec f2f2f2 f9f9f9 ffffff 800000 ff0000 808000 ffff00 008000 00ff00 008080 00ffff 000080 0000ff 800080 ff00ff 2b0000 550000 800000 aa0000 d40000 ff0000 ff2a2a ff5555 ff8080 ffaaaa ffd5d5 280b0b 501616 782121 a02c2c c83737 d35f5f de8787 e9afaf f4d7d7 241c1c 483737 6c5353 916f6f ac9393 c8b7b7 e3dbdb 2b1100 552200 803300 aa4400 d45500 ff6600 ff7f2a ff9955 ffb380 ffccaa ffe6d5 28170b 502d16 784421 a05a2c c87137 d38d5f deaa87 e9c6af f4e3d7 241f1c 483e37 6c5d53 917c6f ac9d93 c8beb7 e3dedb 2b2200 554400 806600 aa8800 d4aa00 ffcc00 ffd42a ffdd55 ffe680 ffeeaa fff6d5 28220b 504416 786721 a0892c c8ab37 d3bc5f decd87 e9ddaf';
$('swatches').innerHTML = '<svg viewBox="0 0 19 21"><path d="M0 0L19 21M19 0L0 21" stroke="#700000" stroke-width="1.500"/></svg>' + pal.split(' ').map(c => `<i style="background:#${c}"></i>`).join('');
```
